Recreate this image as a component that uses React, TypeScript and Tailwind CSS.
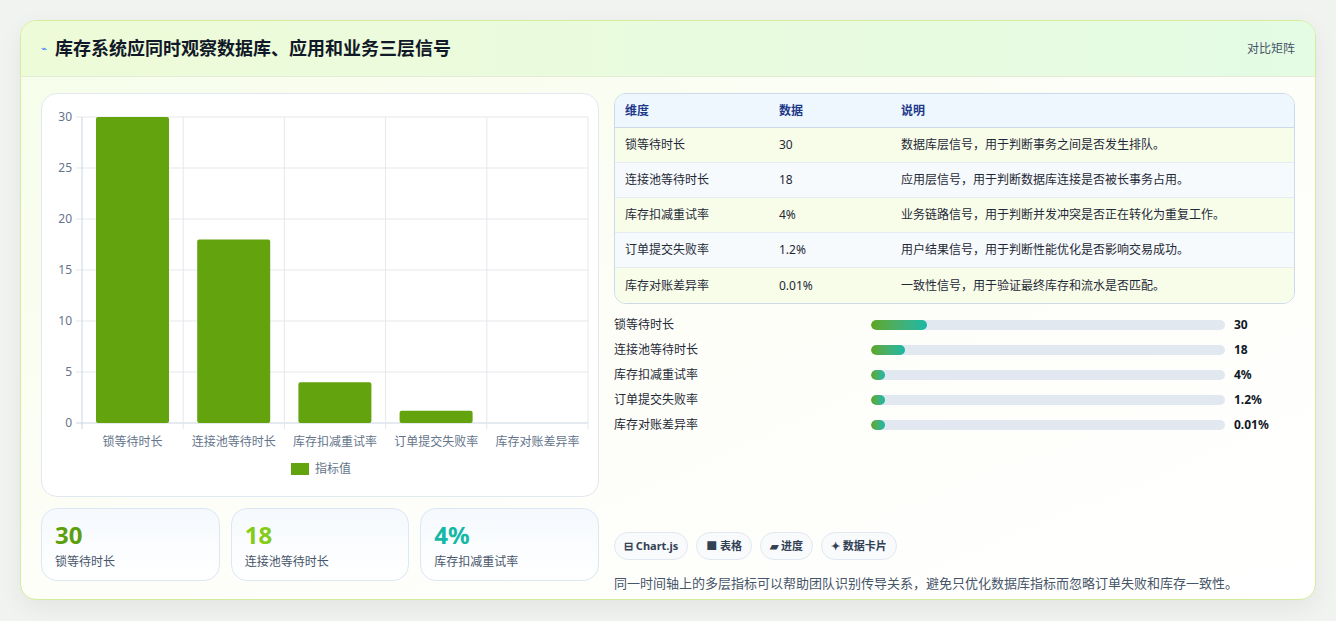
const F = { fontFamily: '"Noto Sans", "Noto Sans CJK SC", sans-serif' };

const rows = [
  { k: "锁等待时长", v: "30", d: "数据库层信号，用于判断事务之间是否发生排队。", w: 56 },
  { k: "连接池等待时长", v: "18", d: "应用层信号，用于判断数据库连接是否被长事务占用。", w: 34 },
  { k: "库存扣减重试率", v: "4%", d: "业务链路信号，用于判断并发冲突是否正在转化为重复工作。", w: 14 },
  { k: "订单提交失败率", v: "1.2%", d: "用户结果信号，用于判断性能优化是否影响交易成功。", w: 14 },
  { k: "库存对账差异率", v: "0.01%", d: "一致性信号，用于验证最终库存和流水是否匹配。", w: 14 },
];
const vals = [30, 18, 4, 1.2, 0.01];

function Chart() {
  // card-local coords: plot x 40..546, y 23 (30) .. 329 (0)
  const x0 = 40, top = 23, bot = 329, cw = 101.2;
  return (
    <svg width="558" height="404" viewBox="0 0 558 404" style={F}>
      {[0, 5, 10, 15, 20, 25, 30].map((t) => {
        const y = bot - (t / 30) * (bot - top);
        return (
          <g key={t}>
            <line x1={x0 - 6} x2={546} y1={y} y2={y} stroke={t === 0 ? "#cbd5e1" : "#e5e7eb"} />
            <text x={x0 - 10} y={y + 4} fontSize="12" fill="#64748b" textAnchor="end">{t}</text>
          </g>
        );
      })}
      {[0, 1, 2, 3, 4, 5].map((i) => (
        <line key={i} x1={x0 + i * cw} x2={x0 + i * cw} y1={top} y2={bot + 6} stroke={i === 0 ? "#cbd5e1" : "#e5e7eb"} />
      ))}
      {vals.map((v, i) => {
        const h = (v / 30) * (bot - top);
        return <rect key={i} x={x0 + i * cw + 14} y={bot - h} width={73} height={h} rx={2} fill="#62a30e" />;
      })}
      {rows.map((r, i) => (
        <text key={i} x={x0 + i * cw + cw / 2} y={352} fontSize="12" fill="#64748b" textAnchor="middle">{r.k}</text>
      ))}
      <rect x={249} y={369} width={18} height={12} fill="#62a30e" />
      <text x={273} y={379} fontSize="12" fill="#64748b">指标值</text>
    </svg>
  );
}

export default function App() {
  return (
    <div className="min-h-[621px] bg-[#f1f3f1] pt-5 px-5" style={F}>
      <div className="w-[1296px] h-[580px] rounded-2xl border border-[#d4ec9c] bg-gradient-to-br from-[#f6fde9] via-[#fdfef8] to-white shadow-[0_8px_24px_rgba(0,0,0,0.06)] overflow-hidden">
        <div className="h-[56px] flex items-center justify-between px-5 bg-gradient-to-r from-[#eefbd8] to-[#e4fbe4] border-b border-[#e2ecd6]">
          <div className="flex items-center gap-2">
            <span className="text-[#3b82f6] text-[10px]">⌁</span>
            <span className="text-[18px] font-bold text-[#111827]">库存系统应同时观察数据库、应用和业务三层信号</span>
          </div>
          <span className="text-[12px] text-[#475569]">对比矩阵</span>
        </div>
        <div className="flex gap-[15px] px-5 pt-4">
          <div className="w-[558px] flex flex-col gap-[11px]">
            <div className="h-[404px] rounded-2xl border border-[#e2e8f0] bg-white">
              <Chart />
            </div>
            <div className="flex gap-[11px]">
              {[
                ["30", "锁等待时长", "text-[#5b9f0c]"],
                ["18", "连接池等待时长", "text-[#84cc16]"],
                ["4%", "库存扣减重试率", "text-[#14b8a6]"],
              ].map(([n, l, c]) => (
                <div key={l} className="flex-1 h-[73px] rounded-2xl border border-[#dbe7f3] bg-gradient-to-b from-[#f5f9fd] to-white px-[13px] pt-[10px]">
                  <div className={`text-[24px] font-bold leading-[32px] ${c}`}>{n}</div>
                  <div className="text-[12px] text-[#475569] mt-[2px]">{l}</div>
                </div>
              ))}
            </div>
          </div>
          <div className="w-[684px] flex flex-col">
            <div className="rounded-xl border border-[#cbd9e8] overflow-hidden text-[12px]">
              <div className="flex h-[34px] items-center bg-[#eef6fe] border-b border-[#cbd9e8] font-bold text-[#1e3a8a]">
                <span className="w-[164px] pl-[10px]">维度</span>
                <span className="w-[122px]">数据</span>
                <span>说明</span>
              </div>
              {rows.map((r, i) => (
                <div key={r.k} className={`flex h-[35px] items-center text-[#1f2937] ${i % 2 ? "bg-[#f7fafc]" : "bg-[#f8fdea]"} ${i < 4 ? "border-b border-[#e5ecf3]" : ""}`}>
                  <span className="w-[164px] pl-[10px]">{r.k}</span>
                  <span className="w-[122px]">{r.v}</span>
                  <span>{r.d}</span>
                </div>
              ))}
            </div>
            <div className="flex flex-col gap-[7px] mt-[12px] text-[12px]">
              {rows.map((r) => (
                <div key={r.k} className="flex items-center h-[18px]">
                  <span className="w-[257px] text-[#1f2937]">{r.k}</span>
                  <div className="w-[354px] h-[10px] rounded-full bg-[#e2e8f0] overflow-hidden">
                    <div className="h-full rounded-full bg-gradient-to-r from-[#5ea615] to-[#14b8a6]" style={{ width: r.w }} />
                  </div>
                  <span className="ml-[9px] font-bold text-[#111827]">{r.v}</span>
                </div>
              ))}
            </div>
            <div className="flex gap-2 mt-[98px] text-[11px] font-bold text-[#334155]">
              {["⊟ Chart.js", "■ 表格", "▰ 进度", "✦ 数据卡片"].map((c) => (
                <span key={c} className="h-[28px] px-[9px] flex items-center rounded-full border border-[#e2e8f0] bg-[#f8fafc]">{c}</span>
              ))}
            </div>
            <p className="mt-[14px] text-[13px] text-[#475569]">同一时间轴上的多层指标可以帮助团队识别传导关系，避免只优化数据库指标而忽略订单失败和库存一致性。</p>
          </div>
        </div>
      </div>
    </div>
  );
}
